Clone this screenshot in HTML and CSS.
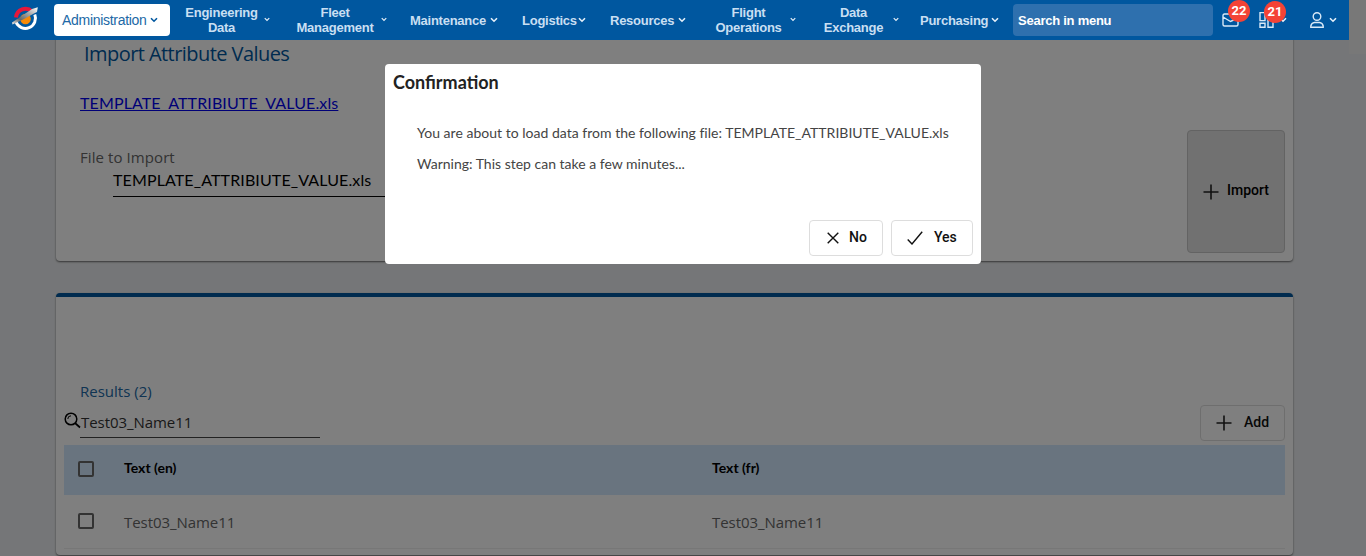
FILE: index.html
```
<!DOCTYPE html>
<html lang="en">
<head>
<meta charset="utf-8">
<title>Import Attribute Values</title>
<link rel="stylesheet" href="styles.css">
</head>
<body>
<svg class="defs" width="0" height="0">
  <symbol id="chev" viewBox="0 0 8 6"><path d="M1 1.2 4 4.2 7 1.2" fill="none" stroke="currentColor" stroke-width="1.6"/></symbol>
  <symbol id="plus" viewBox="0 0 16 16"><path d="M8 .5v15M.5 8h15" fill="none" stroke="currentColor" stroke-width="1.6"/></symbol>
</svg>
<header class="topbar">
  <svg class="logo" viewBox="0 0 28 26">
    <defs><linearGradient id="wing" x1="0" y1="1" x2="1" y2="0"><stop offset="0" stop-color="#eee"/><stop offset=".3" stop-color="#666"/><stop offset=".65" stop-color="#aaa"/><stop offset="1" stop-color="#fff"/></linearGradient></defs>
    <path d="M5 12.500A9.500 9.500 0 0 1 21 6.500" fill="none" stroke="#e8173a" stroke-width="4"/>
    <path d="M23.800 9.500A10 10 0 1 1 5 17" fill="none" stroke="#fff" stroke-width="3"/>
    <circle cx="14.500" cy="14" r="5.300" fill="#f78a08"/>
    <path d="M1 17.500Q10 11.500 21 4L26.800 2.200 26 7 23 8.500Q13 14.500 1.500 19.500Z" fill="url(#wing)"/>
  </svg>
  <nav class="menu">
    <a class="item active"><span>Administration</span><svg class="chev"><use href="#chev"/></svg></a>
    <a class="item eng"><span>Engineering<br>Data</span><svg class="chev small"><use href="#chev"/></svg></a>
    <a class="item fleet"><span>Fleet<br>Management</span><svg class="chev small"><use href="#chev"/></svg></a>
    <a class="item maint"><span>Maintenance</span><svg class="chev"><use href="#chev"/></svg></a>
    <a class="item logi"><span>Logistics</span><svg class="chev"><use href="#chev"/></svg></a>
    <a class="item res"><span>Resources</span><svg class="chev"><use href="#chev"/></svg></a>
    <a class="item flight"><span>Flight<br>Operations</span><svg class="chev small"><use href="#chev"/></svg></a>
    <a class="item data"><span>Data<br>Exchange</span><svg class="chev small"><use href="#chev"/></svg></a>
    <a class="item purch"><span>Purchasing</span><svg class="chev"><use href="#chev"/></svg></a>
  </nav>
  <div class="search">Search in menu</div>
  <div class="tool mail">
    <svg width="17" height="16" viewBox="0 0 17 16"><path d="M10 2H2.500Q1 2 1 3.500v9q0 1.500 1.500 1.500h12q1.500 0 1.500-1.500V6M1 5l7.500 4.500L15 6.500" fill="none" stroke="currentColor" stroke-width="1.400"/></svg>
    <b class="badge">22</b>
  </div>
  <div class="tool apps">
    <svg width="15" height="16" viewBox="0 0 15 16"><path d="M1 .6h5v8h-5zM1 11.300h5v4h-5zM9 .6h5v4h-5zM9 7.200h5v8.100h-5z" fill="none" stroke="currentColor" stroke-width="1.400"/></svg>
    <svg class="chev"><use href="#chev"/></svg>
    <b class="badge">21</b>
  </div>
  <div class="tool user">
    <svg width="14" height="16" viewBox="0 0 14 16"><circle cx="7" cy="4.500" r="3.800" fill="none" stroke="currentColor" stroke-width="1.400"/><path d="M.8 15.200V14Q1.500 10.800 4.500 10.500H9.500Q12.500 10.800 13.200 14v1.200z" fill="none" stroke="currentColor" stroke-width="1.400"/></svg>
    <svg class="chev"><use href="#chev"/></svg>
  </div>
</header>
<div class="corner"></div>
<main class="page">
  <section class="card import-card">
    <div class="import-form">
      <h1>Import Attribute Values</h1>
      <a class="template" href="#">TEMPLATE_ATTRIBIUTE_VALUE.xls</a>
      <label class="file-label">File to Import</label>
      <div class="file-field"><span>TEMPLATE_ATTRIBIUTE_VALUE.xls</span></div>
    </div>
    <button class="btn import-btn"><svg class="plus"><use href="#plus"/></svg><span>Import</span></button>
  </section>
  <section class="card results-card">
    <h2>Results (2)</h2>
    <div class="toolbar">
      <svg class="lens" viewBox="0 0 17 17"><circle cx="7" cy="7" r="5.800" fill="none" stroke="#000" stroke-width="1.500"/><path d="M11 11 16 15.500" stroke="#000" stroke-width="1.700"/><path d="M3.800 7A3.200 3.200 0 0 1 7 3.800" fill="none" stroke="#000"/></svg>
      <div class="query"><span>Test03_Name11</span></div>
      <button class="btn add-btn"><svg class="plus"><use href="#plus"/></svg><span>Add</span></button>
    </div>
    <div class="row head"><i class="check"></i><span>Text (en)</span><span>Text (fr)</span></div>
    <div class="row"><i class="check"></i><span>Test03_Name11</span><span>Test03_Name11</span></div>
  </section>
</main>
<div class="overlay">
  <div class="dialog">
    <h3>Confirmation</h3>
    <p class="first">You are about to load data from the following file: TEMPLATE_ATTRIBIUTE_VALUE.xls</p>
    <p>Warning: This step can take a few minutes...</p>
    <div class="actions">
      <button class="btn no"><svg width="12" height="12" viewBox="0 0 12 12"><path d="M.7.7 11.300 11.300M11.300.7.7 11.300" stroke="#111" stroke-width="1.400"/></svg><span>No</span></button>
      <button class="btn yes"><svg width="16" height="14" viewBox="0 0 16 14"><path d="M.7 8.500 5 13 15.200.7" fill="none" stroke="#111" stroke-width="1.400"/></svg><span>Yes</span></button>
    </div>
  </div>
</div>
</body>
</html>
```
FILE: styles.css
```
* { box-sizing: border-box; }
body { margin: 0; height: 556px; overflow: hidden; background: #ebedf0; font-family: "Open Sans", sans-serif; position: relative; }
h1, h2, h3, p { margin: 0; font-weight: 400; }
.defs { position: absolute; }

.topbar { position: absolute; z-index: 3; left: 0; top: 0; width: 1349px; height: 40px; background: #00579f; display: flex; align-items: center; font: 700 13px/15px "Liberation Sans", Arial, sans-serif; letter-spacing: -.25px; color: #c9dff2; }
.logo { width: 28px; height: 26px; margin: 0 15px 4px 11px; flex: none; }
.menu { display: flex; align-items: center; width: 959px; flex: none; }
.item { display: flex; align-items: center; flex: none; white-space: nowrap; }
.item span { text-align: center; flex: none; }
.item.active { width: 116px; height: 32px; border-radius: 4px; background: #fff; color: #2168a6; font-weight: 400; font-size: 14px; padding-left: 8px; letter-spacing: -.3px; }
.active span { width: 87px; text-align: left; }
.chev { width: 8px; height: 6px; flex: none; margin-left: 1px; color: #e6f1fa; }
.active .chev { color: #00579f; }
.chev.small { width: 6px; height: 5px; margin-top: -2px; }
.eng { width: 119px; padding-left: 10px; }
.eng span { width: 83px; }
.fleet { width: 120px; margin-left: 1px; }
.fleet span { width: 90px; }
.maint { width: 112px; }
.maint span { width: 79px; text-align: left; }
.logi { width: 88px; }
.logi span { width: 55px; text-align: left; }
.res { width: 98px; }
.res span { width: 67px; text-align: left; }
.flight { width: 107px; }
.flight span { width: 81px; }
.data { width: 105px; }
.data span { width: 77px; }
.purch span { width: 70px; text-align: left; }
.search { width: 200px; height: 32px; border-radius: 4px; background: #2e70ae; color: #fff; line-height: 33px; padding-left: 5px; flex: none; }
.tool { position: relative; display: flex; align-items: center; color: #d8e9f7; flex: none; }
.tool .chev { margin-left: 5px; }
.mail { margin-left: 9px; width: 37px; }
.apps { width: 51px; }
.badge { position: absolute; width: 22px; height: 22px; border-radius: 50%; background: #f44336; color: #fff; font: 700 13px/22px Roboto, sans-serif; letter-spacing: 0; text-align: center; top: -11px; left: 5px; }
.mail .badge { top: -12px; left: 6px; }

.corner { position: absolute; left: 1349px; top: 0; width: 17px; height: 54px; background: #f1f1f1; }
.page { padding: 0 0 0 56px; width: 1349px; }
.card { width: 1237px; background: #fff; border-radius: 4px; box-shadow: 0 1px 2px rgba(0,0,0,.55); }
.import-card { height: 261px; display: flex; justify-content: space-between; padding: 0 8px 8px 24px; }
.import-form { width: 560px; padding-top: 42px; }
h1 { font-size: 20px; line-height: 24px; color: #00579f; padding-left: 4px; letter-spacing: -.56px; }
.template { display: block; margin-top: 27px; font: 16px/20px Lato, sans-serif; letter-spacing: .12px; color: #00e; }
.file-label { display: block; margin-top: 34px; font-size: 15px; line-height: 20px; letter-spacing: .08px; color: #666; }
.file-field { margin: 1px 0 0 33px; height: 29px; border-bottom: 1px solid #000; font: 16px/24px Lato, sans-serif; letter-spacing: .12px; color: #000; }
.btn { display: flex; align-items: center; border: 1px solid #ddd; border-radius: 4px; background: #fff; font: 500 14px/18px Roboto, sans-serif; color: #111; padding: 0; }
.btn span { padding-bottom: 2px; }
.plus { width: 16px; height: 16px; flex: none; color: #222; }
.import-btn { align-self: flex-end; width: 98px; height: 123px; background: #e2e2e2; border-color: #c6c6c6; padding-left: 15px; gap: 8px; color: #000; }
.import-btn .plus { margin-top: 1px; }
.import-btn span { padding-bottom: 4px; }
.results-card { margin-top: 32px; height: 262px; border-top: 4px solid #00579f; padding: 84px 8px 0; }
h2 { font-size: 15px; line-height: 20px; padding-left: 16px; color: #2168a6; }
.toolbar { display: flex; align-items: flex-start; height: 44px; }
.lens { width: 17px; height: 17px; margin-top: 11px; flex: none; }
.query { width: 240px; height: 37px; margin-left: -1px; border-bottom: 1px solid #444; font-size: 15px; line-height: 22px; letter-spacing: -.06px; padding: 10px 0 0 1px; color: #333; }
.add-btn { width: 85px; height: 36px; margin: 4px 0 0 auto; padding-left: 15px; gap: 12px; }
.row { height: 54px; border-bottom: 1px solid #eee; display: grid; grid-template-columns: 60px 588px 1fr; align-items: center; font-size: 15px; letter-spacing: -.06px; color: #666; }
.row.head { height: 50px; border: 0; background: #d2e8fe; color: #000; font: 700 14px Lato, sans-serif; letter-spacing: 0; }
.head span { padding-bottom: 5px; }
.check { width: 16px; height: 16px; border: 2px solid #666; border-radius: 2px; margin-left: 14px; }
.row .check { margin-bottom: 1px; }
.head .check { margin-bottom: 2px; }

.overlay { position: absolute; z-index: 2; inset: 0; background: rgba(0,0,0,.5); padding: 64px 0 0 385px; }
.dialog { width: 596px; height: 200px; background: #fff; border-radius: 4px; padding: 8px; display: flex; flex-direction: column; font: 14px/20px Lato, sans-serif; color: #444; }
h3 { font: 700 18px/20px Lato, sans-serif; color: #222; }
.dialog p { padding-left: 24px; }
.dialog .first { margin: 31px 0 11px; letter-spacing: .02px; }
.actions { display: flex; gap: 8px; justify-content: flex-end; margin-top: auto; }
.actions .btn { height: 36px; }
.no { width: 74px; padding-left: 17px; gap: 10px; }
.yes { width: 82px; padding-left: 15px; gap: 11px; }
```
